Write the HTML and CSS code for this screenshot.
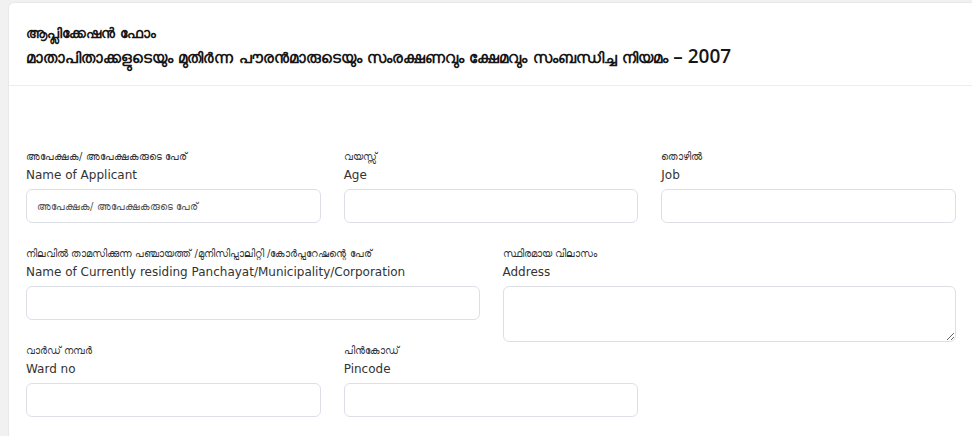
FILE: index.html
```html
<!DOCTYPE html>
<html lang="ml">
<head>
<meta charset="utf-8">
<link rel="stylesheet" href="styles.css">
</head>
<body>
<div class="card">
  <div class="card-header">
    <h1 class="title">ആപ്ലിക്കേഷൻ ഫോം</h1>
    <h2 class="subtitle">മാതാപിതാക്കളുടെയും മുതിർന്ന പൗരൻമാരുടെയും സംരക്ഷണവും ക്ഷേമവും സംബന്ധിച്ച നിയമം <span class="year">– 2007</span></h2>
  </div>
  <div class="card-body">
    <div class="row row-3">
      <div class="group">
        <div class="ml">അപേക്ഷക/ അപേക്ഷകരുടെ പേര്</div>
        <div class="en">Name of Applicant</div>
        <input class="field" type="text" placeholder="അപേക്ഷക/ അപേക്ഷകരുടെ പേര്">
      </div>
      <div class="group">
        <div class="ml">വയസ്സ്</div>
        <div class="en">Age</div>
        <input class="field" type="text">
      </div>
      <div class="group">
        <div class="ml">തൊഴിൽ</div>
        <div class="en">Job</div>
        <input class="field" type="text">
      </div>
    </div>
    <div class="row row-2">
      <div class="group">
        <div class="ml">നിലവിൽ താമസിക്കുന്ന പഞ്ചായത്ത് /മുനിസിപ്പാലിറ്റി /കോർപ്പറേഷന്റെ പേര്</div>
        <div class="en">Name of Currently residing Panchayat/Municipality/Corporation</div>
        <input class="field" type="text">
      </div>
      <div class="group">
        <div class="ml">സ്ഥിരമായ വിലാസം</div>
        <div class="en">Address</div>
        <textarea class="field area"></textarea>
      </div>
    </div>
    <div class="row row-3">
      <div class="group">
        <div class="ml">വാർഡ് നമ്പർ</div>
        <div class="en">Ward no</div>
        <input class="field" type="text">
      </div>
      <div class="group">
        <div class="ml">പിൻകോഡ്</div>
        <div class="en">Pincode</div>
        <input class="field" type="text">
      </div>
    </div>
  </div>
</div>
</body>
</html>
```

FILE: styles.css
```css
html, body {
  margin: 0;
  padding: 0;
}
body {
  background: #f1f1f1;
  font-family: "DejaVu Sans", "Noto Sans", sans-serif;
  color: #2b2b2b;
  padding: 2px 0 0 8px;
  height: 100vh;
  box-sizing: border-box;
  overflow: hidden;
}
.card {
  background: #fff;
  border: 1px solid #e6e8ec;
  border-right: none;
  border-bottom: none;
  border-radius: 6px 0 0 0;
  height: 100%;
  box-sizing: border-box;
  overflow: hidden;
}
.card-header {
  padding: 19px 0 0 17px;
  height: 63px;
  border-bottom: 1px solid #e8eef6;
}
.title {
  margin: 0;
  font-size: 14px;
  font-weight: bold;
  line-height: 22px;
  color: #161616;
}
.subtitle {
  margin: 0;
  font-size: 15.3px;
  font-weight: bold;
  line-height: 24px;
  color: #161616;
}
.year {
  font-family: "Open Sans", "DejaVu Sans", sans-serif;
  font-size: 19px;
  font-weight: 600;
}
.card-body {
  padding: 62px 16px 0 17px;
}
.row {
  display: grid;
  column-gap: 23px;
  margin-bottom: 22px;
}
.row-3 {
  grid-template-columns: repeat(3, 1fr);
}
.row-2 {
  grid-template-columns: repeat(2, 1fr);
}
.group {
  display: flex;
  flex-direction: column;
}
.ml {
  font-size: 10px;
  line-height: 18px;
  color: #333;
}
.en {
  font-size: 12px;
  line-height: 18px;
  color: #333;
  margin-bottom: 5px;
}
.field {
  box-sizing: border-box;
  height: 34px;
  border: 1px solid #dcdfe5;
  border-radius: 6px;
  background: #fff;
  padding: 0 10px;
  font-family: inherit;
  font-size: 10px;
  outline: none;
}
.field::placeholder {
  color: #555;
}
.area {
  height: 56px;
  margin-bottom: -22px;
  resize: vertical;
}
```
